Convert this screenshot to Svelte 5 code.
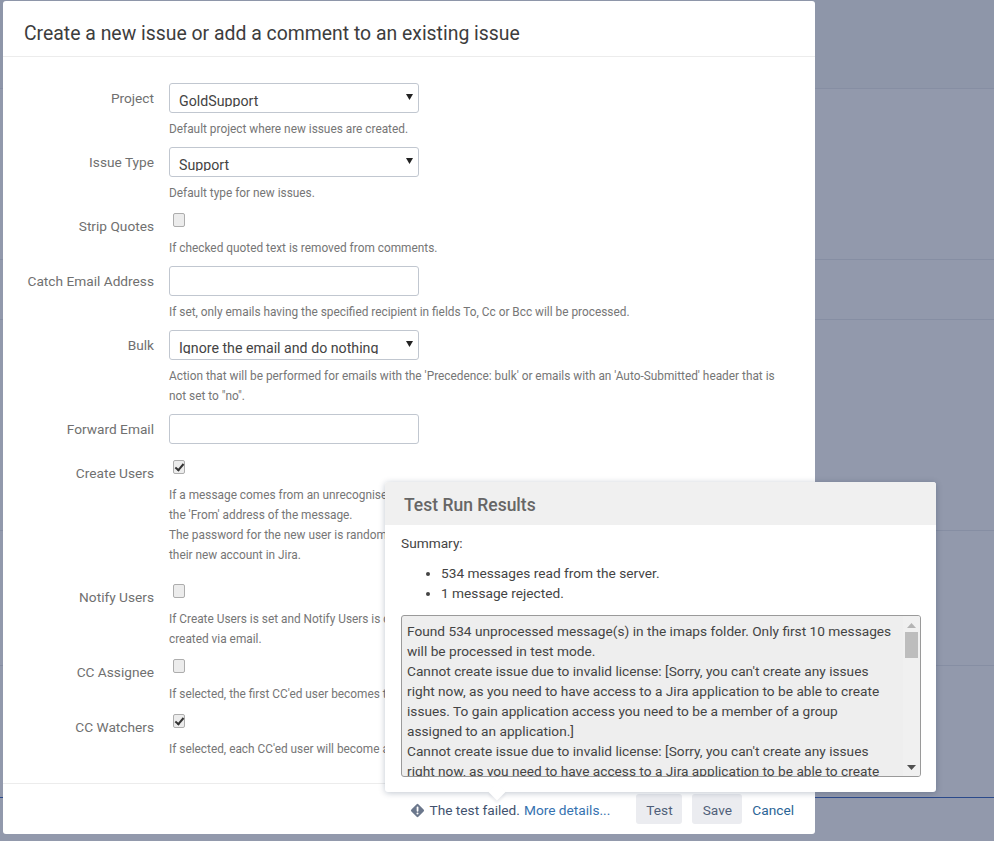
<script>
  const fields = [
    { label: 'Project', kind: 'select', value: 'GoldSupport', help: ['Default project where new issues are created.'] },
    { label: 'Issue Type', kind: 'select', value: 'Support', help: ['Default type for new issues.'] },
    { label: 'Strip Quotes', kind: 'check', checked: false, help: ['If checked quoted text is removed from comments.'] },
    { label: 'Catch Email Address', kind: 'text', help: ['If set, only emails having the specified recipient in fields To, Cc or Bcc will be processed.'] },
    { label: 'Bulk', kind: 'select', value: 'Ignore the email and do nothing', help: ['Action that will be performed for emails with the \'Precedence: bulk\' or emails with an \'Auto-Submitted\' header that is not set to "no".'] },
    { label: 'Forward Email', kind: 'text', help: [] },
    { label: 'Create Users', kind: 'check', checked: true, wide: true, help: [
      'If a message comes from an unrecognised address, a new user will be created with the username set to',
      'the \'From\' address of the message.',
      'The password for the new user is randomly generated, and an email is sent to inform them of',
      'their new account in Jira.'
    ] },
    { label: 'Notify Users', kind: 'check', checked: false, help: [
      'If Create Users is set and Notify Users is checked, an email will be sent to users that are',
      'created via email.'
    ] },
    { label: 'CC Assignee', kind: 'check', checked: false, help: ['If selected, the first CC\'ed user becomes the assignee of the issue.'] },
    { label: 'CC Watchers', kind: 'check', checked: true, help: ['If selected, each CC\'ed user will become a watcher of the issue.'] }
  ];

  const bands = [89, 171, 60, 211, 135, 132];

  const log = `Found 534 unprocessed message(s) in the imaps folder. Only first 10 messages will be processed in test mode.
Cannot create issue due to invalid license: [Sorry, you can't create any issues right now, as you need to have access to a Jira application to be able to create issues. To gain application access you need to be a member of a group assigned to an application.]
Cannot create issue due to invalid license: [Sorry, you can't create any issues right now, as you need to have access to a Jira application to be able to create issues. To gain application access you need to be a member of a group assigned to an application.]`;
</script>

<div class="page">
  {#each bands as h, i}
    <div class="band" class:first={i === 0} class:navy={i === bands.length - 1} style="height: {h}px"></div>
  {/each}

  <div class="dialog">
    <h2 class="dialog-title">Create a new issue or add a comment to an existing issue</h2>

    <form class="form">
      {#each fields as f}
        <div class="row" class:wide={f.wide} class:nohelp={f.help.length === 0}>
          <label class="label" for={f.label}>{f.label}</label>
          <div class="control">
            {#if f.kind === 'select'}
              <div class="select-wrap">
                <select class="select" id={f.label}>
                  <option>{f.value}</option>
                </select>
                <svg class="caret" width="7" height="6" viewBox="0 0 7 6"><polygon points="0,0 7,0 3.5,6" fill="#222" /></svg>
              </div>
            {:else if f.kind === 'text'}
              <input class="input" id={f.label} type="text" />
            {:else}
              <div class="check-wrap">
                <input class="check" id={f.label} type="checkbox" checked={f.checked} />
              </div>
            {/if}
            {#if f.help.length}
              <div class="help">
                {#each f.help as line}
                  <div>{line}</div>
                {/each}
              </div>
            {/if}
          </div>
        </div>
      {/each}
    </form>

    <div class="footer">
      <svg class="warn" width="15" height="15" viewBox="0 0 16 16">
        <rect x="2.6" y="2.6" width="10.8" height="10.8" rx="1.6" transform="rotate(45 8 8)" fill="#6b778c" />
        <rect x="7.1" y="3.8" width="1.9" height="5.4" rx="0.9" fill="#fff" />
        <circle cx="8" cy="11.2" r="1.1" fill="#fff" />
      </svg>
      <span class="status">The test failed.</span>
      <a class="details" href="#details">More details...</a>
      <button class="btn test" type="button">Test</button>
      <button class="btn save" type="button">Save</button>
      <a class="cancel" href="#cancel">Cancel</a>
    </div>
  </div>

  <div class="popup">
    <h3 class="popup-title">Test Run Results</h3>
    <div class="popup-body">
      <div class="summary">Summary:</div>
      <ul class="list">
        <li>534 messages read from the server.</li>
        <li>1 message rejected.</li>
      </ul>
      <div class="log">
        <div class="log-text">{log}</div>
        <div class="scrollbar">
          <svg class="arrow" width="9" height="5" viewBox="0 0 9 5"><polygon points="4.5,0 9,5 0,5" fill="#b4b4b4" /></svg>
          <div class="thumb"></div>
          <svg class="arrow down" width="9" height="5" viewBox="0 0 9 5"><polygon points="0,0 9,0 4.5,5" fill="#505050" /></svg>
        </div>
      </div>
    </div>
    <div class="tip"></div>
  </div>
</div>

<style>
  :global(body) {
    margin: 0;
    background: #9299ac;
  }

  .page {
    position: relative;
    width: 994px;
    height: 841px;
    overflow: hidden;
    font-family: Roboto, "Noto Sans", sans-serif;
    font-size: 13.7px;
    color: #444;
    background: #9299ac;
  }

  .band {
    box-sizing: border-box;
    border-bottom: 1px solid #868ea3;
  }
  .band.first {
    background: #8e96a9;
  }
  .band.navy {
    border-bottom: 1px solid #2b4a8b;
  }

  .dialog {
    position: absolute;
    left: 3px;
    top: 1px;
    width: 812px;
    height: 833px;
    display: flex;
    flex-direction: column;
    background: #fff;
    border-radius: 3px;
  }

  .dialog-title {
    margin: 0;
    height: 55px;
    padding-left: 21px;
    line-height: 65px;
    box-sizing: content-box;
    font-size: 19.4px;
    font-weight: 400;
    color: #3d3d3d;
    border-bottom: 1px solid #ececec;
  }

  .form {
    flex: 1;
    padding: 26px 25px 0 0;
  }

  .row {
    display: grid;
    grid-template-columns: 151px 1fr;
    column-gap: 15px;
    margin-bottom: 8px;
  }
  .row.nohelp {
    margin-bottom: 14px;
  }
  .row.wide {
    margin-bottom: 17px;
  }

  .label {
    text-align: right;
    line-height: 30px;
    color: #707070;
  }

  .select-wrap {
    position: relative;
    width: 250px;
  }

  .select {
    display: block;
    appearance: none;
    box-sizing: border-box;
    width: 250px;
    height: 30px;
    padding: 9px 24px 5px 9px;
    border: 1px solid #c1c7d0;
    border-radius: 3px;
    background: #fff;
    font: inherit;
    font-size: 14.2px;
    color: #444;
    line-height: 16px;
  }

  .caret {
    position: absolute;
    right: 6px;
    top: 11px;
    pointer-events: none;
  }

  .input {
    display: block;
    box-sizing: border-box;
    width: 250px;
    height: 30px;
    border: 1px solid #c1c7d0;
    border-radius: 3px;
    background: #fff;
  }

  .check-wrap {
    height: 21px;
    padding: 2px 0 0 4px;
    box-sizing: border-box;
  }

  .check {
    appearance: none;
    display: block;
    position: relative;
    box-sizing: border-box;
    width: 12px;
    height: 14px;
    margin: 0;
    border: 1px solid #adadad;
    border-radius: 2px;
    background: #ececec;
  }
  .check:checked::after {
    content: "";
    position: absolute;
    left: 3px;
    top: 1px;
    width: 3px;
    height: 7px;
    border: solid #333;
    border-width: 0 2px 2px 0;
    transform: rotate(40deg);
  }

  .help {
    margin-top: 6px;
    font-size: 11.85px;
    line-height: 20px;
    color: #767676;
  }

  .footer {
    display: flex;
    align-items: center;
    justify-content: flex-end;
    height: 50px;
    padding-right: 21px;
    border-top: 1px solid #ececec;
  }

  .warn {
    margin: 2px 4px 0 0;
  }

  .status {
    color: #42526e;
    margin: 2px 4px 0 0;
  }

  .details {
    color: #3572b0;
    text-decoration: none;
    margin: 2px 26px 0 0;
  }

  .btn {
    height: 30px;
    padding: 2px 10px 0;
    border: none;
    border-radius: 3px;
    background: #ebecf0;
    font: inherit;
    color: #505f79;
  }
  .test {
    width: 46px;
    margin-right: 10px;
  }
  .save {
    width: 50px;
    margin-right: 10px;
  }

  .cancel {
    color: #2a6496;
    text-decoration: none;
    margin-top: 2px;
  }

  .popup {
    position: absolute;
    left: 385px;
    top: 482px;
    width: 551px;
    height: 310px;
    background: #fff;
    border-radius: 3px;
    box-shadow: 0 1px 6px rgba(9, 30, 66, 0.25);
  }

  .popup-title {
    margin: 0;
    height: 43px;
    padding-left: 19px;
    line-height: 46px;
    background: #f0f0f0;
    border-radius: 3px 3px 0 0;
    font-size: 17.5px;
    font-weight: 500;
    color: #666;
  }

  .popup-body {
    padding: 8px 15px 0 16px;
  }

  .summary {
    line-height: 20px;
  }

  .list {
    margin: 10px 0 12px;
    padding: 0 0 0 40px;
    line-height: 20px;
  }

  .log {
    display: flex;
    box-sizing: border-box;
    height: 162px;
    border: 1px solid #9a9a9a;
    border-radius: 3px;
    background: #eeeeee;
    overflow: hidden;
  }

  .log-text {
    flex: 1;
    padding: 5px 9px 0 5px;
    line-height: 20px;
    white-space: pre-wrap;
    color: #444;
  }

  .scrollbar {
    width: 17px;
    display: flex;
    flex-direction: column;
    align-items: center;
    background: #f0f0f0;
    padding-top: 7px;
  }
  .arrow.down {
    margin-top: auto;
    margin-bottom: 6px;
  }
  .thumb {
    width: 13px;
    height: 26px;
    margin-top: 4px;
    background: #bdbdbd;
  }

  .tip {
    position: absolute;
    left: 106px;
    bottom: -6px;
    width: 12px;
    height: 12px;
    background: #fff;
    transform: rotate(45deg);
    box-shadow: 2px 2px 3px rgba(9, 30, 66, 0.08);
  }
</style>
